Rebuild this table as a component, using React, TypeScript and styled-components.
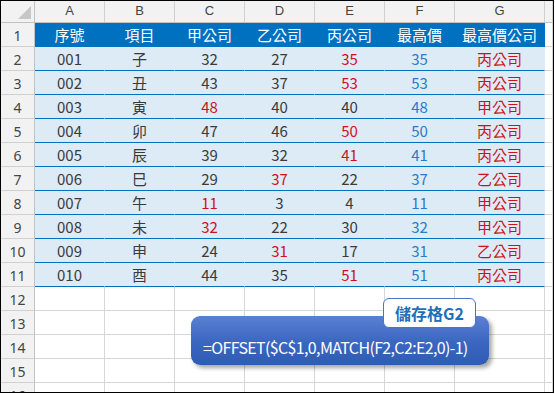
import React from "react";
import styled, { createGlobalStyle } from "styled-components";

const Global = createGlobalStyle`
  html, body { margin: 0; padding: 0; background: #ffffff; }
  body { font-family: "Noto Sans CJK TC", "Noto Sans", sans-serif; }
`;

const Frame = styled.div`
  position: relative;
  width: 554px;
  height: 393px;
  box-sizing: border-box;
  border: 1px solid #000;
  overflow: hidden;
  background: #fff;
`;

const Grid = styled.div`
  display: grid;
  grid-template-columns: 34px repeat(6, 70px) 90px 1fr;
  grid-template-rows: 22px repeat(16, 24px);
`;

type Kind = "corner" | "colhead" | "rowhead" | "title" | "data" | "empty" | "tail" | "tailhead";

const Cell = styled.div<{ $kind: Kind; $color?: string }>`
  box-sizing: border-box;
  display: flex;
  align-items: center;
  justify-content: center;
  overflow: hidden;
  white-space: nowrap;
  font-size: 15px;
  color: ${(p) => p.$color || "#3a3a3a"};
  border-right: 1px solid #d6d6d6;
  border-bottom: 1px solid #d6d6d6;
  ${(p) =>
    p.$kind === "corner" &&
    `background:#f2f2f2; border-right-color:#c2c2c2; border-bottom-color:#c2c2c2; position:relative;`}
  ${(p) =>
    (p.$kind === "colhead" || p.$kind === "tailhead") &&
    `background:#f2f2f2; border-right-color:#d0d0d0; border-bottom-color:#c2c2c2; font-family:"Liberation Sans", sans-serif; font-size:13px; color:#444; padding-bottom:3px;`}
  ${(p) =>
    p.$kind === "rowhead" &&
    `background:#f2f2f2; border-right-color:#c2c2c2; border-bottom-color:#d0d0d0; font-family:"Noto Sans", sans-serif; font-size:14px; color:#444; padding-top:2px;`}
  ${(p) =>
    p.$kind === "title" &&
    `background:#0070c0; border-right-color:#0070c0; border-bottom-color:#0070c0; color:#ffffff;`}
  ${(p) =>
    p.$kind === "data" &&
    `background:#ddebf7; border-right-color:#ddebf7; border-bottom-color:#0070c0;`}
`;

const Triangle = styled.div`
  position: absolute;
  right: 3px;
  bottom: 3px;
  width: 0;
  height: 0;
  border-left: 13px solid transparent;
  border-bottom: 13px solid #c7c7c7;
`;

const Callout = styled.div`
  position: absolute;
  left: 190px;
  top: 315px;
  width: 298px;
  height: 49px;
  box-sizing: border-box;
  border-radius: 9px;
  background: linear-gradient(#5a80d2, #3a66c0 55%, #2f5bb5);
  box-shadow: 3px 3px 4px rgba(0, 0, 0, 0.35);
  color: #fff;
  font-family: "Noto Sans CJK TC", "Noto Sans", sans-serif;
  font-size: 16px;
  letter-spacing: -0.65px;
  display: flex;
  align-items: center;
  padding: 12px 0 0 12px;
`;

const Label = styled.div`
  position: absolute;
  left: 382px;
  top: 297px;
  width: 93px;
  height: 30px;
  box-sizing: border-box;
  border: 1px solid #4a74c4;
  border-radius: 6px;
  background: #fff;
  color: #1f6eb8;
  font-weight: bold;
  font-size: 16px;
  font-family: "Noto Sans CJK TC", "Noto Sans", sans-serif;
  display: flex;
  align-items: center;
  justify-content: center;
`;

const RED = "#d0101c";
const BLUE = "#2a7bc8";

const headers = ["序號", "項目", "甲公司", "乙公司", "丙公司", "最高價", "最高價公司"];
const rows: [string, string, number, number, number, number, string][] = [
  ["001", "子", 32, 27, 35, 35, "丙公司"],
  ["002", "丑", 43, 37, 53, 53, "丙公司"],
  ["003", "寅", 48, 40, 40, 48, "甲公司"],
  ["004", "卯", 47, 46, 50, 50, "丙公司"],
  ["005", "辰", 39, 32, 41, 41, "丙公司"],
  ["006", "巳", 29, 37, 22, 37, "乙公司"],
  ["007", "午", 11, 3, 4, 11, "甲公司"],
  ["008", "未", 32, 22, 30, 32, "甲公司"],
  ["009", "申", 24, 31, 17, 31, "乙公司"],
  ["010", "酉", 44, 35, 51, 51, "丙公司"],
];

export default function App() {
  const cells: React.ReactNode[] = [];
  cells.push(
    <Cell key="corner" $kind="corner">
      <Triangle />
    </Cell>
  );
  "ABCDEFG".split("").forEach((l) =>
    cells.push(
      <Cell key={"h" + l} $kind="colhead">
        {l}
      </Cell>
    )
  );
  cells.push(<Cell key="htail" $kind="tailhead" />);

  cells.push(
    <Cell key="r1" $kind="rowhead">
      1
    </Cell>
  );
  headers.forEach((h, i) =>
    cells.push(
      <Cell key={"t" + i} $kind="title">
        {h}
      </Cell>
    )
  );
  cells.push(<Cell key="t-tail" $kind="tail" />);

  rows.forEach((r, ri) => {
    const max = Math.max(r[2], r[3], r[4]);
    cells.push(
      <Cell key={"rh" + ri} $kind="rowhead">
        {ri + 2}
      </Cell>
    );
    r.forEach((v, ci) => {
      let color: string | undefined;
      if (ci >= 2 && ci <= 4 && v === max) color = RED;
      if (ci === 5) color = BLUE;
      if (ci === 6) color = RED;
      cells.push(
        <Cell key={`d${ri}-${ci}`} $kind="data" $color={color}>
          {String(v)}
        </Cell>
      );
    });
    cells.push(<Cell key={"dt" + ri} $kind="tail" />);
  });

  for (let n = 12; n <= 16; n++) {
    cells.push(
      <Cell key={"rh" + n} $kind="rowhead">
        {n}
      </Cell>
    );
    for (let c = 0; c < 8; c++) cells.push(<Cell key={`e${n}-${c}`} $kind="empty" />);
  }

  return (
    <>
      <Global />
      <Frame>
        <Grid>{cells}</Grid>
        <Callout>=OFFSET($C$1,0,MATCH(F2,C2:E2,0)-1)</Callout>
        <Label>儲存格G2</Label>
      </Frame>
    </>
  );
}
